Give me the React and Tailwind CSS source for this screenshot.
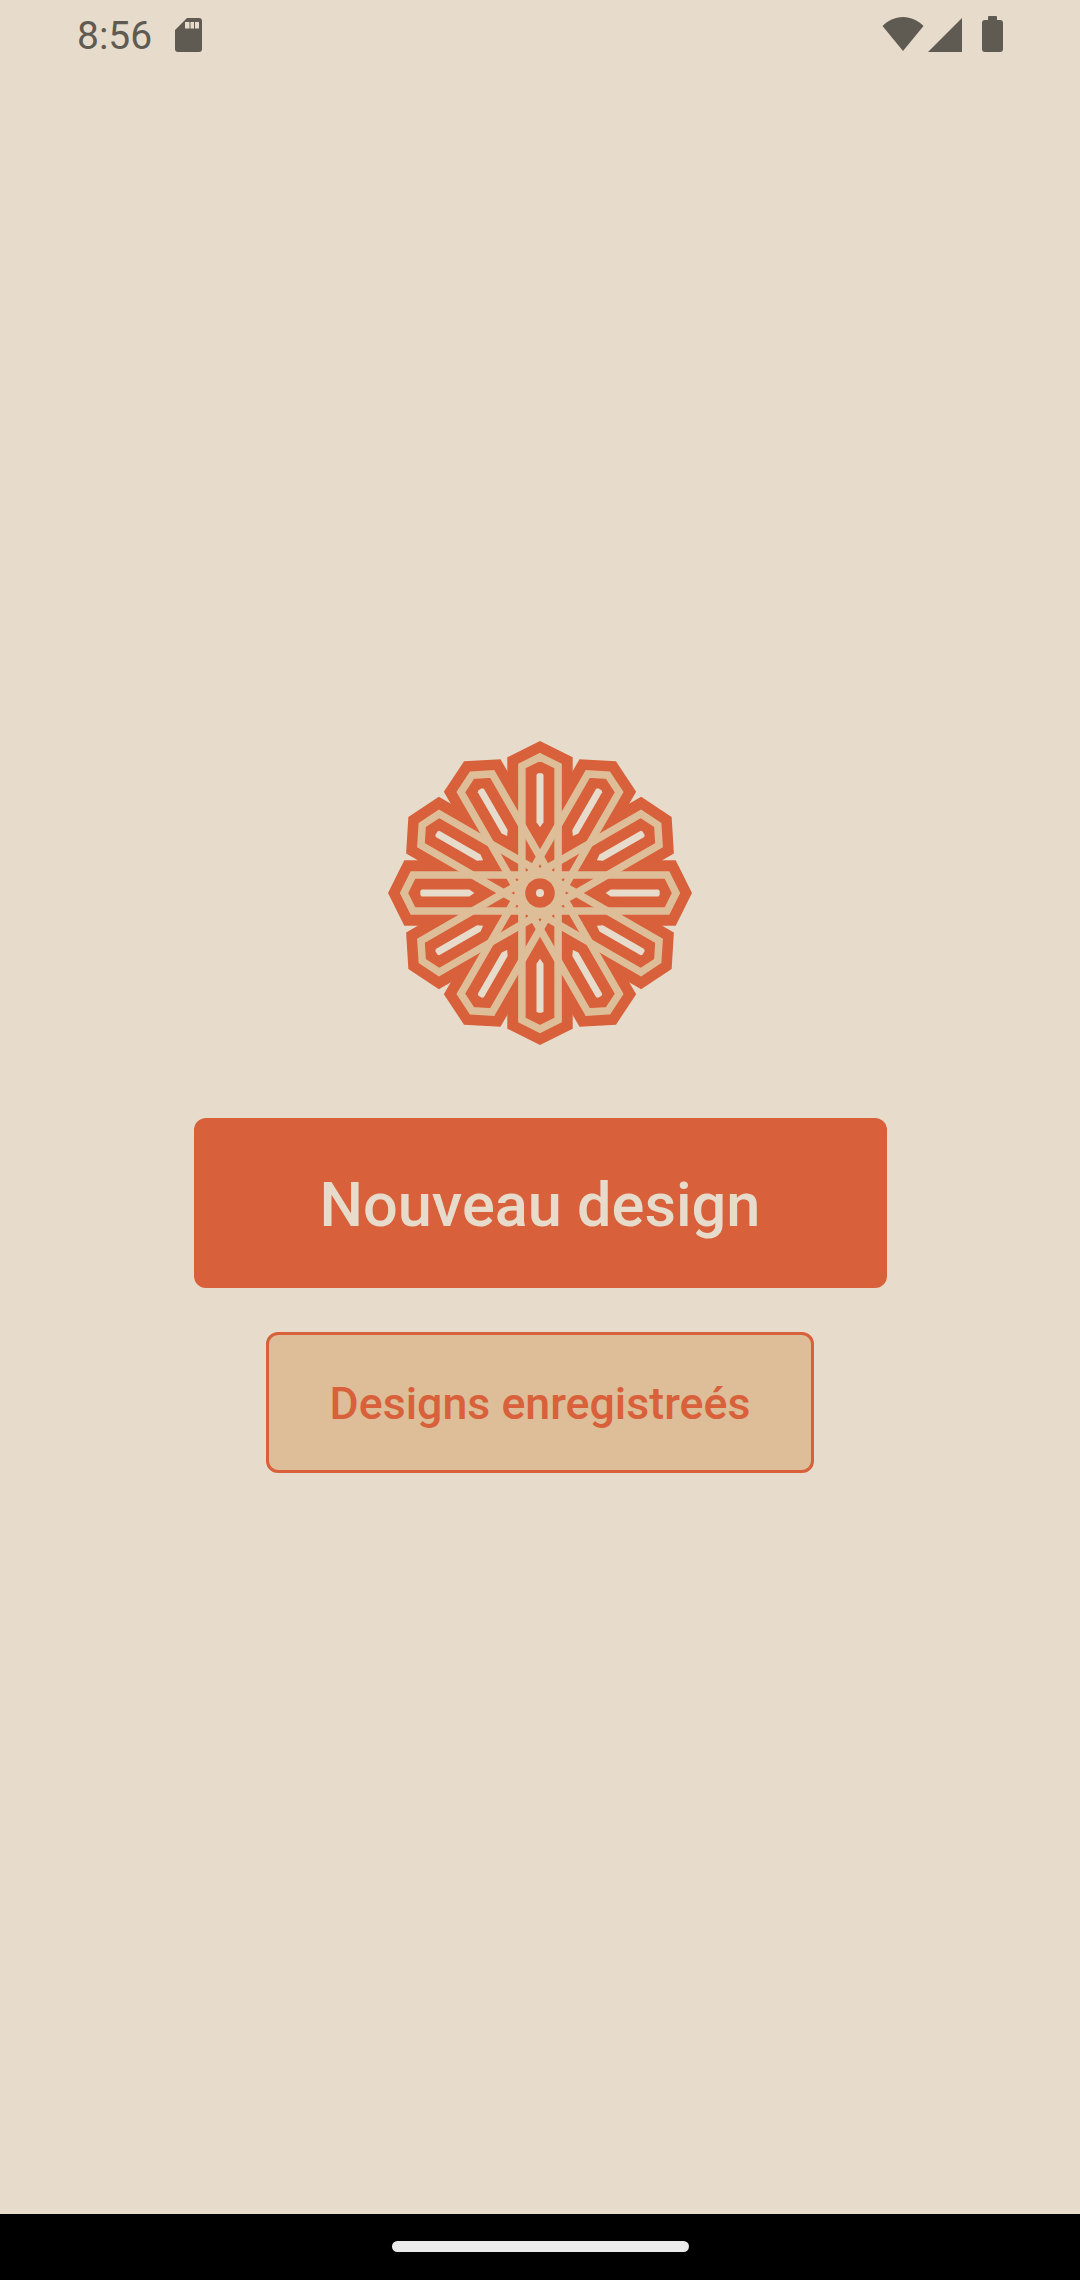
const ORANGE = '#d8603a'
const TAN = '#ddbe98'
const CREAM = '#e7dccc'

const HEX_ANGLES = [0, 30, 60, 90, 120, 150]
const SLIT_ANGLES = [0, 30, 60, 90, 120, 150, 180, 210, 240, 270, 300, 330]

// the logo: 6 long hexagons turned around the centre, the tan bands cross each other
function Logo() {
  return (
    <svg width="306" height="306" viewBox="-153 -153 306 306" className="block">
      {HEX_ANGLES.map((a) => (
        <polygon
          key={a}
          transform={`rotate(${a})`}
          fill={ORANGE}
          points="0,-152 32.7,-135.7 32.7,135.7 0,152 -32.7,135.7 -32.7,-135.7"
        />
      ))}
      {HEX_ANGLES.map((a) => (
        <polygon
          key={a}
          transform={`rotate(${a})`}
          fill="none"
          stroke={TAN}
          strokeWidth="7.500"
          points="0,-136 18.100,-127 18.100,127 0,136 -18.100,127 -18.100,-127"
        />
      ))}
      {SLIT_ANGLES.map((a) => (
        <polygon
          key={a}
          transform={`rotate(${a})`}
          fill={CREAM}
          points="-2,-119.7 2,-119.7 3.5,-118.3 3.5,-70.7 0,-65.7 -3.5,-70.7 -3.5,-118.3"
        />
      ))}
      <circle r="14.600" fill={ORANGE} />
      <circle r="4" fill={CREAM} />
    </svg>
  )
}

function SdIcon() {
  return (
    <svg width="27" height="34" viewBox="0 0 27 34" className="block">
      <path
        fill="#5f5a52"
        fillRule="evenodd"
        d="M12 0H24a3 3 0 0 1 3 3V31a3 3 0 0 1-3 3H3a3 3 0 0 1-3-3V12Z M10 4V10.500H14.500V4Z M15.500 4V10.500H19V4Z M20 4V10.500H24V4Z"
      />
    </svg>
  )
}

function WifiIcon() {
  return (
    <svg width="42" height="34" viewBox="0 0 42 34" className="block">
      <path fill="#5f5a52" d="M0.500 9C6 3.500 13 0 21 0S36 3.500 41.500 9L21 34Z" />
    </svg>
  )
}

function SignalIcon() {
  return (
    <svg width="34" height="34" viewBox="0 0 34 34" className="block">
      <path fill="#5f5a52" d="M34 0V34H0Z" />
    </svg>
  )
}

function BatteryIcon() {
  return (
    <div className="flex flex-col items-center">
      <div className="w-[9px] h-[4px] rounded-t-[1px] bg-[#5f5a52]" />
      <div className="w-[21px] h-[32px] rounded-[3px] bg-[#5f5a52]" />
    </div>
  )
}

export default function App() {
  return (
    <div className="h-[2280px] flex flex-col bg-[#e7dccc] font-['Roboto',sans-serif]">
      {/* Status bar */}
      <div className="h-[72px] flex items-start justify-between pl-[77px] pr-[77px] pt-[16px] text-[#5f5a52]">
        <div className="flex items-start">
          <span className="text-[39px] leading-[20px] mt-[10px] w-[98px] block">8:56</span>
          <div className="mt-[2px]">
            <SdIcon />
          </div>
        </div>
        <div className="flex items-start">
          <div className="mt-[1px]">
            <WifiIcon />
          </div>
          <div className="ml-[4px] mt-[2px]">
            <SignalIcon />
          </div>
          <div className="ml-[20px]">
            <BatteryIcon />
          </div>
        </div>
      </div>

      {/* Main */}
      <div className="flex-1 flex flex-col items-center justify-center pb-[73px]">
        <Logo />
        <button className="mt-[72px] w-[693px] h-[170px] pt-[6px] rounded-[12px] bg-[#d8603a] text-[#e7dccc] text-[61.300px] font-medium">
          Nouveau design
        </button>
        <button className="mt-[44px] w-[548px] h-[141px] pt-[5px] rounded-[12px] border-[3px] border-[#d8603a] bg-[#ddbe98] text-[#d8603a] text-[44.700px] font-medium">
          Designs enregistreés
        </button>
      </div>

      {/* Nav bar */}
      <div className="h-[66px] bg-black flex justify-center pt-[27px]">
        <div className="w-[297px] h-[11px] rounded-full bg-[#ebebeb]" />
      </div>
    </div>
  )
}
